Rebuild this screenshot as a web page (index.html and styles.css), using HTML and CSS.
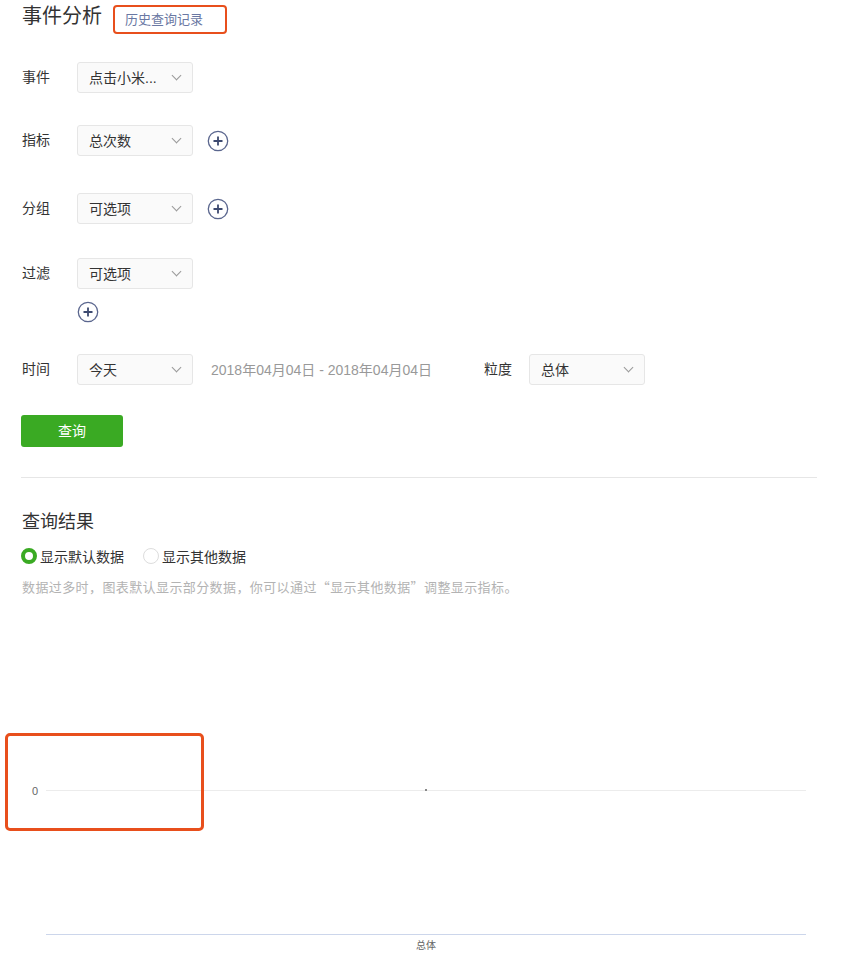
FILE: index.html
```html
<!DOCTYPE html>
<html lang="zh-CN">
<head>
    <meta charset="UTF-8">
    <title>事件分析</title>
    <link rel="stylesheet" href="styles.css">
</head>
<body>
    <div class="page">
        <div class="header">
            <h1>事件分析</h1>
            <a class="history-link" href="#">历史查询记录</a>
        </div>

        <div class="form-item row-event">
            <span class="label">事件</span>
            <div class="select"><span>点击小米...</span><i class="arrow"></i></div>
        </div>

        <div class="form-item row-metric">
            <span class="label">指标</span>
            <div class="select"><span>总次数</span><i class="arrow"></i></div>
            <span class="add-btn">
                <svg width="22" height="22" viewBox="0 0 22 22"><circle cx="11" cy="11" r="9.7" fill="none" stroke="#5a668e" stroke-width="1.3"/><path d="M11 6.5v9M6.5 11h9" stroke="#3d4a70" stroke-width="1.8"/></svg>
            </span>
        </div>

        <div class="form-item row-group">
            <span class="label">分组</span>
            <div class="select"><span>可选项</span><i class="arrow"></i></div>
            <span class="add-btn">
                <svg width="22" height="22" viewBox="0 0 22 22"><circle cx="11" cy="11" r="9.7" fill="none" stroke="#5a668e" stroke-width="1.3"/><path d="M11 6.5v9M6.5 11h9" stroke="#3d4a70" stroke-width="1.8"/></svg>
            </span>
        </div>

        <div class="form-item row-filter">
            <span class="label">过滤</span>
            <div class="select"><span>可选项</span><i class="arrow"></i></div>
        </div>
        <div class="filter-add">
            <svg width="22" height="22" viewBox="0 0 22 22"><circle cx="11" cy="11" r="9.7" fill="none" stroke="#5a668e" stroke-width="1.3"/><path d="M11 6.5v9M6.5 11h9" stroke="#3d4a70" stroke-width="1.8"/></svg>
        </div>

        <div class="form-item row-time">
            <span class="label">时间</span>
            <div class="select"><span>今天</span><i class="arrow"></i></div>
            <span class="date-range">2018年04月04日 - 2018年04月04日</span>
            <span class="label label-grain">粒度</span>
            <div class="select"><span>总体</span><i class="arrow"></i></div>
        </div>

        <button class="btn-query">查询</button>

        <div class="divider"></div>

        <h2>查询结果</h2>
        <div class="radios">
            <label class="radio checked"><i></i>显示默认数据</label>
            <label class="radio"><i></i>显示其他数据</label>
        </div>
        <p class="hint">数据过多时，图表默认显示部分数据，你可以通过“显示其他数据”调整显示指标。</p>

        <div class="chart">
            <svg width="826" height="345" viewBox="0 0 826 345">
                <line x1="25" y1="180.5" x2="785" y2="180.5" stroke="#ececec" stroke-width="1"/>
                <text x="14" y="185" font-size="11" fill="#666" text-anchor="middle" font-family="Liberation Sans, sans-serif">0</text>
                <rect x="404" y="179" width="2" height="2" fill="#888"/>
                <line x1="25" y1="324.5" x2="785" y2="324.5" stroke="#ccd6eb" stroke-width="1"/>
                <text x="405" y="339" font-size="10" fill="#666" text-anchor="middle" font-family="Noto Sans CJK SC, sans-serif">总体</text>
            </svg>
            <div class="mark"></div>
        </div>
    </div>
    <div class="scroll-track"></div>
</body>
</html>
```

FILE: styles.css
```css
* {
    margin: 0;
    padding: 0;
    box-sizing: border-box;
}

body {
    font-family: "Liberation Sans", "Noto Sans CJK SC", sans-serif;
    color: #333;
    background: #fff;
    display: flex;
    min-height: 100vh;
    overflow: hidden;
}

.page {
    flex: 1;
    padding-left: 21px;
    padding-right: 30px;
}

.scroll-track {
    width: 10px;
    background: #f6f7f9;
    border-left: 1px solid #eceef1;
}

.header {
    display: flex;
    align-items: center;
    height: 34px;
    padding-top: 2px;
}

h1 {
    font-size: 20px;
    font-weight: normal;
    color: #333;
    margin-left: 1px;
    margin-top: -8px;
}

.history-link {
    margin-left: 11px;
    margin-top: 2px;
    width: 114px;
    height: 29px;
    padding: 2px 0 0 10px;
    border: 2.5px solid #e84f1c;
    border-radius: 4px;
    font-size: 13px;
    color: #6a78a3;
    text-decoration: none;
}

.form-item {
    display: flex;
    align-items: center;
    height: 31px;
}

.row-event { margin-top: 28px; }
.row-metric { margin-top: 32px; }
.row-group { margin-top: 37px; }
.row-filter { margin-top: 34px; }
.row-time { margin-top: 31px; }

.label {
    width: 56px;
    font-size: 14px;
    color: #333;
    padding-left: 1px;
    margin-top: -3px;
}

.select {
    width: 116px;
    height: 31px;
    background: #fafafa;
    border: 1px solid #e6e6e6;
    border-radius: 3px;
    display: flex;
    align-items: center;
    justify-content: space-between;
    padding: 0 12px 0 11px;
    font-size: 14px;
    color: #333;
}

.select span {
    margin-top: -2px;
}

.arrow {
    width: 7px;
    height: 7px;
    border-right: 1.3px solid #999;
    border-bottom: 1.3px solid #999;
    transform: rotate(45deg);
    margin-top: -4px;
}

.add-btn {
    margin-left: 14px;
    display: flex;
}

.filter-add {
    margin: 12px 0 0 56px;
    height: 22px;
    display: flex;
}

.date-range {
    margin-left: 18px;
    font-size: 14px;
    color: #999;
    margin-top: -2px;
}

.label-grain {
    margin-left: 51px;
    width: 46px;
}

.btn-query {
    display: block;
    margin-top: 30px;
    width: 102px;
    height: 32px;
    background: #3aaa23;
    color: #fff;
    border: none;
    border-radius: 3px;
    font-family: inherit;
    font-size: 14px;
    padding-bottom: 2px;
}

.divider {
    margin-top: 30px;
    height: 1px;
    background: #e6e6e6;
    width: 796px;
}

h2 {
    margin-top: 32px;
    font-size: 18px;
    font-weight: normal;
    color: #333;
    line-height: 24px;
    margin-left: 1px;
}

.radios {
    display: flex;
    margin-top: 12px;
    height: 20px;
    align-items: center;
}

.radio {
    display: flex;
    align-items: center;
    font-size: 14px;
    color: #333;
    margin-right: 19px;
}

.radio i {
    width: 16px;
    height: 16px;
    border-radius: 50%;
    border: 1px solid #ddd;
    margin-right: 3px;
}

.radio.checked i {
    border: 4px solid #3aaa23;
}

.hint {
    margin-top: 11px;
    font-family: "Noto Sans CJK SC", sans-serif;
    font-size: 13px;
    letter-spacing: 0.4px;
    color: #b3b3b3;
    margin-left: 1px;
}

.chart {
    position: relative;
    margin-top: 14px;
}

.chart svg {
    display: block;
}

.mark {
    position: absolute;
    left: -16px;
    top: 123px;
    width: 199px;
    height: 98px;
    border: 3px solid #e84f1c;
    border-radius: 5px;
}
```
